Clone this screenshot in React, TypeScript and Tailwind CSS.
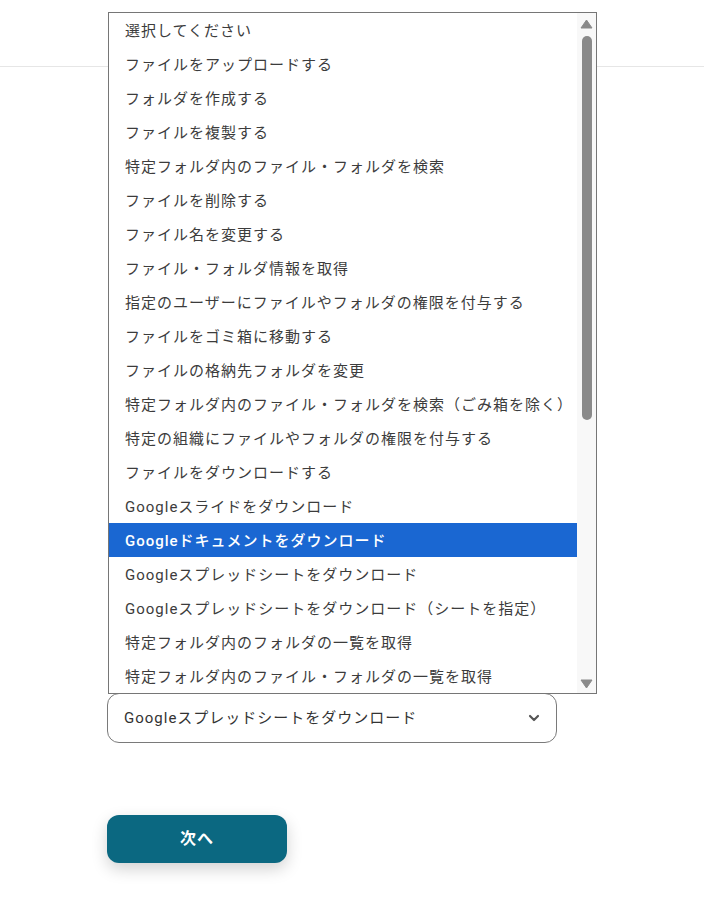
const options = [
  "選択してください",
  "ファイルをアップロードする",
  "フォルダを作成する",
  "ファイルを複製する",
  "特定フォルダ内のファイル・フォルダを検索",
  "ファイルを削除する",
  "ファイル名を変更する",
  "ファイル・フォルダ情報を取得",
  "指定のユーザーにファイルやフォルダの権限を付与する",
  "ファイルをゴミ箱に移動する",
  "ファイルの格納先フォルダを変更",
  "特定フォルダ内のファイル・フォルダを検索（ごみ箱を除く）",
  "特定の組織にファイルやフォルダの権限を付与する",
  "ファイルをダウンロードする",
  "Googleスライドをダウンロード",
  "Googleドキュメントをダウンロード",
  "Googleスプレッドシートをダウンロード",
  "Googleスプレッドシートをダウンロード（シートを指定）",
  "特定フォルダ内のフォルダの一覧を取得",
  "特定フォルダ内のファイル・フォルダの一覧を取得",
];

const SELECTED = 15;

export default function App() {
  return (
    <div
      className="relative h-[909px] w-[704px] bg-white overflow-hidden"
      style={{ fontFamily: 'Roboto, "Noto Sans CJK JP", sans-serif' }}
    >
      {/* Header divider */}
      <div className="h-[67px] border-b border-[#e6e6e6]" />

      {/* Form */}
      <div className="pl-[107px] pt-[626px] flex flex-col gap-[72px]">
        <div className="w-[450px] h-[50px] rounded-[12px] border border-[#7a7a7a] flex items-center justify-between pl-[16px] pr-[14px]">
          <span className="text-[15px] tracking-[1px] text-[#333] pt-[1px]">Googleスプレッドシートをダウンロード</span>
          <svg width="16" height="16" viewBox="0 0 24 24" fill="none" stroke="#555" strokeWidth="3.2" strokeLinecap="round" strokeLinejoin="round">
            <path d="M6 9l6 6 6-6" />
          </svg>
        </div>
        <button className="w-[180px] h-[48px] rounded-[12px] bg-[#0b6881] text-white text-[16px] font-bold tracking-[1px] shadow-[0_6px_16px_rgba(0,0,0,0.18)]">
          次へ
        </button>
      </div>

      {/* Open select list */}
      <div className="absolute left-[108px] top-[12px] w-[489px] h-[682px] border border-[#767676] bg-white flex">
        <ul className="flex-1 flex flex-col">
          {options.map((o, i) => (
            <li
              key={o}
              className={
                i === SELECTED
                  ? "h-[34px] flex items-center pl-[16px] pt-[2px] text-[15px] tracking-[1px] bg-[#1a67d2] text-white font-medium"
                  : "h-[34px] flex items-center pl-[16px] pt-[2px] text-[15px] tracking-[1px] text-[#3c3c3c]"
              }
            >
              {o}
            </li>
          ))}
        </ul>
        <div className="w-[19px] bg-[#f8f8f8] flex flex-col items-center">
          <svg width="13" height="10" viewBox="0 0 13 10" className="mt-[6px]">
            <path d="M6.5 1L12 9H1z" fill="#8a8a8a" strokeLinejoin="round" stroke="#8a8a8a" strokeWidth="1" />
          </svg>
          <div className="mt-[7px] w-[10px] h-[384px] rounded-full bg-[#8a8a8a]" />
          <div className="flex-1" />
          <svg width="13" height="10" viewBox="0 0 13 10" className="mb-[4px]">
            <path d="M6.5 9L12 1H1z" fill="#8a8a8a" strokeLinejoin="round" stroke="#8a8a8a" strokeWidth="1" />
          </svg>
        </div>
      </div>
    </div>
  );
}
